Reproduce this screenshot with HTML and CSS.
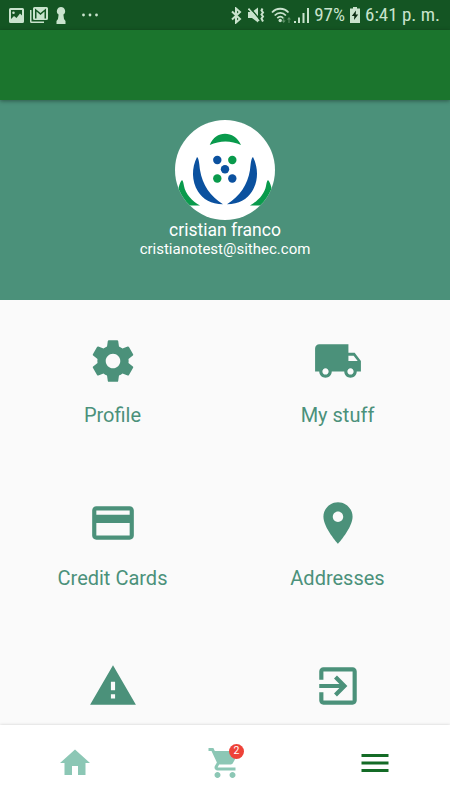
FILE: index.html
```html
<!DOCTYPE html>
<html lang="en">
<head>
    <meta charset="UTF-8">
    <meta name="viewport" content="width=device-width, initial-scale=1.0">
    <title>Account</title>
    <link rel="stylesheet" href="styles.css">
</head>
<body>
    <div class="status-bar">
        <div class="status-left">
            <svg class="status-photo" width="15" height="15" viewBox="0 0 15 15">
                <path fill-rule="evenodd" d="M1.500 0h12A1.500 1.500 0 0 1 15 1.500v12a1.500 1.500 0 0 1-1.500 1.500h-12A1.500 1.500 0 0 1 0 13.500v-12A1.500 1.500 0 0 1 1.500 0zM2 2v9l3-3 2.500 2L11 5.500l2 2V2zM4.500 3.500a1.300 1.300 0 1 1 0 2.600 1.300 1.300 0 0 1 0-2.600z"/>
            </svg>
            <svg class="status-mail" width="18" height="16" viewBox="0 0 18 16">
                <path d="M0 3h1.500v11.500H14V16H1.500A1.500 1.500 0 0 1 0 14.500z"/>
                <path fill-rule="evenodd" d="M4.500 0h12A1.500 1.500 0 0 1 18 1.500v10a1.500 1.500 0 0 1-1.500 1.500h-12A1.500 1.500 0 0 1 3 11.500v-10A1.500 1.500 0 0 1 4.500 0zM5 1.500v10h1.500V4.500l4 3.500 4-3.500v7H16v-10l-5.500 4.500z"/>
            </svg>
            <svg class="status-key" width="10" height="17" viewBox="0 0 10 17">
                <path d="M5 0a4.200 4.200 0 0 1 2.400 7.600L8 12l1.500 2v3H.5v-3L2 12l.6-4.400A4.200 4.200 0 0 1 5 0z"/>
            </svg>
            <svg width="16" height="4" viewBox="0 0 16 4">
                <circle cx="1.500" cy="2" r="1.400"/><circle cx="8" cy="2" r="1.400"/><circle cx="14.500" cy="2" r="1.400"/>
            </svg>
        </div>
        <div class="status-right">
            <svg class="status-bluetooth" width="11" height="17" viewBox="0 0 11 17">
                <path class="line bluetooth" d="M1 4.500l8 7.500-4 3.500v-14L9 5l-8 7.500"/>
            </svg>
            <svg class="status-mute" width="17" height="16" viewBox="0 0 17 16">
                <path d="M0 5h4l6-4.500v15L4 11H0z"/>
                <path class="cut" d="M2.500 1.500l9 10.500"/>
                <path class="line" d="M0.500 1.500l10.500 12.500"/>
                <path class="line vibrate" d="M14.500 1.500l-1 2 1.500 2-1.500 2 1.500 2-1.500 2 1.500 3"/>
            </svg>
            <svg class="status-wifi" width="21" height="17" viewBox="0 0 21 17">
                <path class="line wifi" d="M1 5.500c4.500-5 12-5 16.500 0M3.700 8.500c3.300-3.500 8-3.500 11.200 0M6.300 11.200c2-2 4-2 6 0"/>
                <circle cx="9.200" cy="13.500" r="1.700"/>
                <path class="faded" d="M12.200 10h1v3.500h1.500L12.700 16l-2-2.500h1.500zM17.500 16h1v-3.500H20L18 10l-2 2.500h1.500z"/>
            </svg>
            <svg class="status-signal" width="16" height="16" viewBox="0 0 16 16">
                <path d="M0 14h2v2H0zM4 10.500h2V16H4zM8.500 6h2v10h-2zM13 1h2v15h-2z"/>
            </svg>
            <span class="battery-text">97%</span>
            <svg class="status-battery" width="10" height="16" viewBox="0 0 10 16">
                <path d="M3 0h4v1.500h3V16H0V1.500h3z"/>
                <path class="bolt" d="M6 3.500L1.800 9h2.500L4 13l4.200-5.500H5.700z"/>
            </svg>
            <span class="clock">6:41 p. m.</span>
        </div>
    </div>

    <header class="app-bar"></header>

    <section class="user">
        <div class="avatar">
            <svg width="100" height="100" viewBox="0 0 100 100">
                <path class="logo-green" d="M34.700 25C38 17 43.500 13.700 50 13.700S62.500 17 66 25C56 20.200 45 20.200 34.700 25z"/>
                <path class="logo-blue" d="M22 37C16.500 48 16.500 61 23 71.500 28 79.500 36 84 48 84.200 35 76 27.500 65 25 50c-.6-4-.8-11.500-3-13z"/>
                <path class="logo-blue" d="M78 37c5.500 11 5.500 24-1 34.500C72 79.500 64 84 52 84.200 65 76 72.500 65 75 50c.6-4 .8-11.500 3-13z"/>
                <path class="logo-green" d="M7 60C5 62 4 66 3 70v15.400h22C17 81 10.500 74 9 66c-.4-2.500-.8-5-2-6z"/>
                <path class="logo-green" d="M93 60c2 2 3 6 4 10v15.400H75C83 81 89.500 74 91 66c.4-2.500.8-5 2-6z"/>
                <circle class="logo-blue" cx="42.300" cy="40" r="4.200"/>
                <circle class="logo-green" cx="57.300" cy="40" r="4.200"/>
                <circle class="logo-blue" cx="50" cy="49.200" r="4.200"/>
                <circle class="logo-green" cx="42.300" cy="58.500" r="4.200"/>
                <circle class="logo-blue" cx="57.300" cy="58.500" r="4.200"/>
            </svg>
        </div>
        <div class="user-name">cristian franco</div>
        <div class="user-email">cristianotest@sithec.com</div>
    </section>

    <main class="menu">
        <div class="menu-item">
            <svg viewBox="0 0 24 24"><path d="M19.430 12.980c.04-.32.07-.64.07-.98s-.03-.66-.07-.98l2.110-1.650c.19-.15.24-.42.12-.64l-2-3.460c-.12-.22-.39-.3-.61-.22l-2.490 1c-.52-.4-1.080-.73-1.690-.98l-.38-2.650C14.460 2.180 14.250 2 14 2h-4c-.25 0-.46.18-.49.42l-.38 2.650c-.61.25-1.170.59-1.690.98l-2.490-1c-.23-.09-.49 0-.61.22l-2 3.460c-.13.22-.07.49.12.64l2.110 1.650c-.04.32-.07.65-.07.98s.03.66.07.98l-2.110 1.650c-.19.15-.24.42-.12.64l2 3.460c.12.22.39.3.61.22l2.490-1c.52.4 1.080.73 1.690.98l.38 2.650c.03.24.24.42.49.42h4c.25 0 .46-.18.49-.42l.38-2.650c.61-.25 1.170-.59 1.690-.98l2.490 1c.23.09.49 0 .61-.22l2-3.460c.12-.22.07-.49-.12-.64l-2.110-1.650zM12 15.500c-1.930 0-3.500-1.570-3.500-3.500s1.570-3.500 3.500-3.500 3.500 1.570 3.500 3.500-1.570 3.500-3.500 3.500z"/></svg>
            <span>Profile</span>
        </div>
        <div class="menu-item">
            <svg viewBox="0 0 24 24"><path d="M20 8h-3V4H3c-1.100 0-2 .9-2 2v11h2c0 1.660 1.340 3 3 3s3-1.340 3-3h6c0 1.660 1.340 3 3 3s3-1.340 3-3h2v-5l-3-4zM6 18.500c-.83 0-1.500-.67-1.500-1.500s.67-1.500 1.500-1.500 1.500.67 1.500 1.500-.67 1.500-1.500 1.500zm13.500-9l1.960 2.500H17V9.500h2.500zm-1.500 9c-.83 0-1.500-.67-1.500-1.500s.67-1.500 1.500-1.500 1.500.67 1.500 1.500-.67 1.500-1.500 1.500z"/></svg>
            <span>My stuff</span>
        </div>
        <div class="menu-item">
            <svg viewBox="0 0 24 24"><path d="M20 4H4c-1.110 0-1.990.89-1.990 2L2 18c0 1.110.89 2 2 2h16c1.110 0 2-.89 2-2V6c0-1.110-.89-2-2-2zm0 14H4v-6h16v6zm0-10H4V6h16v2z"/></svg>
            <span>Credit Cards</span>
        </div>
        <div class="menu-item">
            <svg viewBox="0 0 24 24"><path d="M12 2C8.130 2 5 5.130 5 9c0 5.250 7 13 7 13s7-7.750 7-13c0-3.870-3.130-7-7-7zm0 9.500c-1.380 0-2.500-1.120-2.500-2.500s1.120-2.500 2.500-2.500 2.500 1.120 2.500 2.500-1.120 2.500-2.500 2.500z"/></svg>
            <span>Addresses</span>
        </div>
        <div class="menu-item">
            <svg viewBox="0 0 24 24"><path d="M1 21h22L12 2 1 21zm12-3h-2v-2h2v2zm0-4h-2v-4h2v4z"/></svg>
        </div>
        <div class="menu-item">
            <svg viewBox="0 0 24 24"><path d="M10.090 15.590L11.500 17l5-5-5-5-1.410 1.410L12.670 11H3v2h9.670l-2.580 2.590zM19 3H5c-1.110 0-2 .9-2 2v4h2V5h14v14H5v-4H3v4c0 1.100.89 2 2 2h14c1.100 0 2-.9 2-2V5c0-1.100-.9-2-2-2z"/></svg>
        </div>
    </main>

    <nav class="bottom-nav">
        <a class="nav-item">
            <svg viewBox="0 0 24 24"><path d="M10 20v-6h4v6h5v-8h3L12 3 2 12h3v8z"/></svg>
        </a>
        <a class="nav-item">
            <div class="cart">
                <svg viewBox="0 0 24 24"><path d="M7 18c-1.100 0-1.990.9-1.990 2S5.900 22 7 22s2-.9 2-2-.9-2-2-2zM1 2v2h2l3.600 7.590-1.350 2.450c-.16.28-.25.61-.25.96 0 1.100.9 2 2 2h12v-2H7.420c-.14 0-.25-.11-.25-.25l.03-.12.9-1.630h7.450c.75 0 1.410-.41 1.750-1.030l3.580-6.490c.08-.14.12-.31.12-.48 0-.55-.45-1-1-1H5.210l-.94-2H1zm16 16c-1.100 0-1.990.9-1.990 2s.89 2 1.990 2 2-.9 2-2-.9-2-2-2z"/></svg>
                <span class="badge">2</span>
            </div>
        </a>
        <a class="nav-item active">
            <svg viewBox="0 0 24 24"><path d="M3 18h18v-2H3v2zm0-5h18v-2H3v2zm0-7v2h18V6H3z"/></svg>
        </a>
    </nav>
</body>
</html>
```

FILE: styles.css
```css
* {
    box-sizing: border-box;
}

body {
    display: flex;
    flex-direction: column;
    height: 100vh;
    margin: 0;
    overflow: hidden;
    font-family: Roboto, sans-serif;
    background-color: #fafafa;
}

svg {
    display: block;
    flex-shrink: 0;
}

/* status bar */
.status-bar {
    display: flex;
    justify-content: space-between;
    align-items: center;
    flex-shrink: 0;
    height: 30px;
    padding: 0 10px 0 9px;
    background-color: #145523;
    color: #c9e3cd;
    fill: #c9e3cd;
}

.status-left,
.status-right {
    display: flex;
    align-items: center;
}

.status-mail {
    margin-left: 6px;
}

.status-key {
    margin: 0 16px 0 8px;
}

.status-mute {
    margin-left: 6px;
}

.status-wifi {
    margin-left: 6px;
}

.status-signal {
    margin-left: 2px;
}

.line {
    fill: none;
    stroke: #c9e3cd;
    stroke-width: 1.6;
}

.bluetooth,
.vibrate {
    stroke-width: 2;
}

.wifi {
    stroke-width: 1.8;
}

.cut {
    stroke: #145523;
    stroke-width: 1.5;
}

.faded {
    fill: #5c9067;
}

.bolt {
    fill: #0b2b12;
}

.battery-text,
.clock {
    font-family: "Roboto Condensed", Roboto, sans-serif;
    font-size: 19px;
    font-stretch: 75%;
    line-height: 30px;
    white-space: nowrap;
}

.battery-text {
    margin: 0 5px 0 4px;
}

.clock {
    margin-left: 5px;
}

/* header */
.app-bar {
    position: relative;
    flex-shrink: 0;
    height: 70px;
    background-color: #1b752d;
    box-shadow: 0 1px 4px rgba(0, 0, 0, 0.4);
}

.user {
    display: flex;
    flex-direction: column;
    align-items: center;
    flex-shrink: 0;
    height: 200px;
    padding-top: 20px;
    background-color: #4b917a;
    color: #fff;
}

.avatar {
    width: 100px;
    height: 100px;
    border-radius: 50%;
    overflow: hidden;
    background-color: #fff;
}

.logo-green {
    fill: #099a4c;
}

.logo-blue {
    fill: #0b519f;
}

.user-name {
    font-size: 17.5px;
    line-height: 21px;
}

.user-email {
    font-size: 15px;
    line-height: 16px;
}

/* menu grid */
.menu {
    display: grid;
    grid-template-columns: 1fr 1fr;
    grid-auto-rows: 162.5px;
    flex: 1;
    min-height: 0;
    overflow: hidden;
    color: #4b917a;
    fill: #4b917a;
}

.menu-item {
    display: flex;
    flex-direction: column;
    align-items: center;
    gap: 17.5px;
    padding-top: 35.5px;
    font-size: 20px;
    line-height: 25px;
}

.menu-item svg {
    width: 50px;
    height: 50px;
}

/* bottom navigation */
.bottom-nav {
    position: relative;
    display: grid;
    grid-template-columns: repeat(3, 1fr);
    flex-shrink: 0;
    height: 75px;
    background-color: #fff;
    box-shadow: 0 0 3px rgba(0, 0, 0, 0.18);
    fill: #8cc7b5;
}

.nav-item {
    display: flex;
    justify-content: center;
    align-items: center;
}

.nav-item svg {
    width: 36px;
    height: 36px;
}

.active {
    fill: #146b26;
}

.cart {
    position: relative;
}

.badge {
    position: absolute;
    top: -1px;
    right: -1px;
    width: 15px;
    height: 15px;
    border-radius: 50%;
    background-color: #ee4238;
    color: #fff;
    font-size: 10.5px;
    line-height: 14px;
    text-align: center;
}
```
